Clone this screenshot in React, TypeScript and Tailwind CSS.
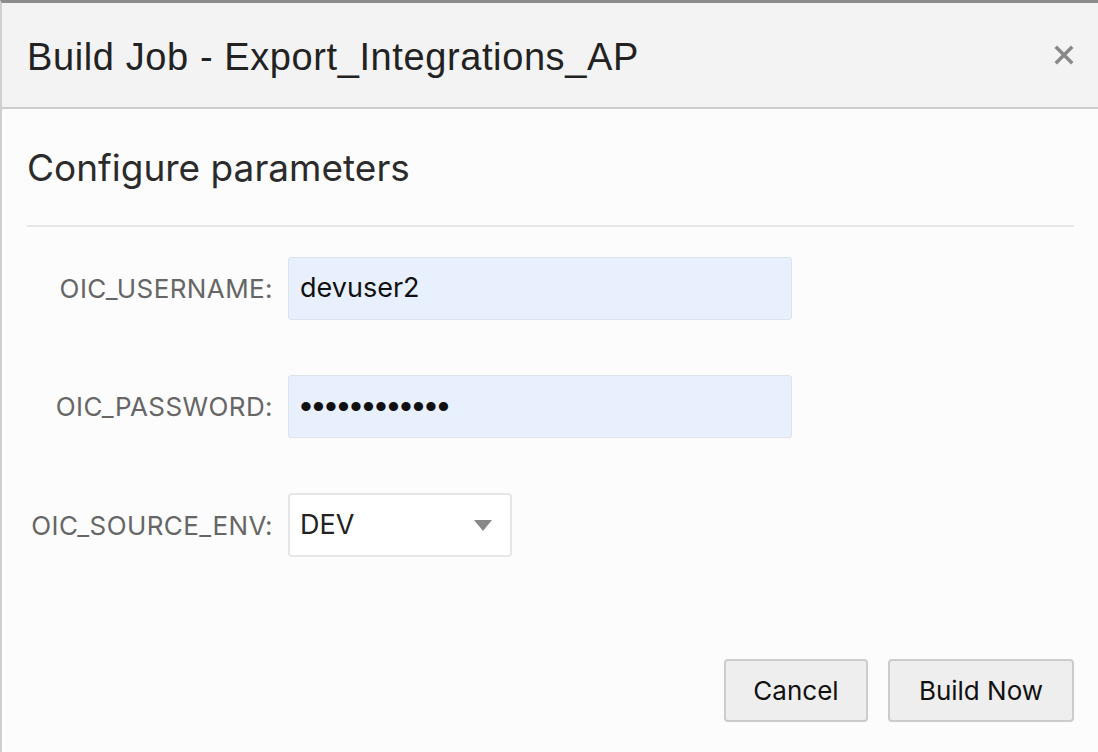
import React from 'react';

const Field = ({ label, children }: { label: string; children: React.ReactNode }) => (
  <div className="flex items-center">
    <label className="w-[286px] shrink-0 pr-[15px] text-right text-[26px] tracking-[0.4px] text-[#666666]">{label}</label>
    {children}
  </div>
);

export default function App() {
  return (
    <div
      className="w-[1098px] h-[752px] overflow-hidden bg-[#fcfcfc] border-t-[3px] border-l-[2px] border-t-[#8c8c8c] border-l-[#cfcfcf] flex flex-col"
      style={{ fontFamily: 'Inter, "Liberation Sans", sans-serif' }}
    >
      {/* Header */}
      <div className="h-[106px] shrink-0 bg-[#f3f3f3] border-b-[2px] border-[#cccccc] flex items-center justify-between pl-[25px] pr-[24px]">
        <h1 className="text-[38px] text-[#222222] tracking-[0.6px] pt-[4px]" style={{ fontFamily: '"Liberation Sans", sans-serif' }}>
          Build Job - Export_Integrations_AP
        </h1>
        <button className="text-[#888888]">
          <svg width="20" height="20" viewBox="0 0 20 20">
            <path d="M3 3 L17 17 M17 3 L3 17" stroke="#888888" strokeWidth="3.5" strokeLinecap="square" />
          </svg>
        </button>
      </div>

      {/* Body */}
      <div className="flex-1 flex flex-col pl-[25px] pr-[24px]">
        <h2 className="text-[37px] text-[#2b2b2b] mt-[35px] leading-[48px]">Configure parameters</h2>
        <div className="h-[2px] bg-[#e6e6e6] mt-[33px]" />

        <div className="flex flex-col gap-[55px] mt-[30px] -ml-[25px]">
          <Field label="OIC_USERNAME:">
            <div className="w-[504px] h-[63px] bg-[#e8f0fe] border border-[#dde3ea] rounded-[3px] flex items-center px-[11px] text-[27px] text-[#111111]">
              devuser2
            </div>
          </Field>
          <Field label="OIC_PASSWORD:">
            <div
              className="w-[504px] h-[63px] bg-[#e8f0fe] border border-[#dde3ea] rounded-[3px] flex items-center px-[11px] text-[34px] tracking-[0.6px] text-[#111111]"
              style={{ fontFamily: '"Liberation Sans", sans-serif' }}
            >
              ••••••••••••
            </div>
          </Field>
          <Field label="OIC_SOURCE_ENV:">
            <div className="w-[224px] h-[64px] bg-white border-[2px] border-[#e6e6e6] rounded-[4px] flex items-center justify-between pl-[10px] pr-[18px] text-[27px] text-[#222222]">
              <span>DEV</span>
              <svg width="18" height="11" viewBox="0 0 18 11">
                <path d="M0 0 H18 L9 11 Z" fill="#888888" />
              </svg>
            </div>
          </Field>
        </div>

        <div className="mt-auto mb-[30px] flex justify-end gap-[20px]">
          <button className="w-[144px] h-[63px] bg-[#eeeeee] border-[2px] border-[#cccccc] rounded-[4px] text-[26px] text-[#111111]">
            Cancel
          </button>
          <button className="w-[186px] h-[63px] bg-[#eeeeee] border-[2px] border-[#cccccc] rounded-[4px] text-[26px] text-[#111111]">
            Build Now
          </button>
        </div>
      </div>
    </div>
  );
}
